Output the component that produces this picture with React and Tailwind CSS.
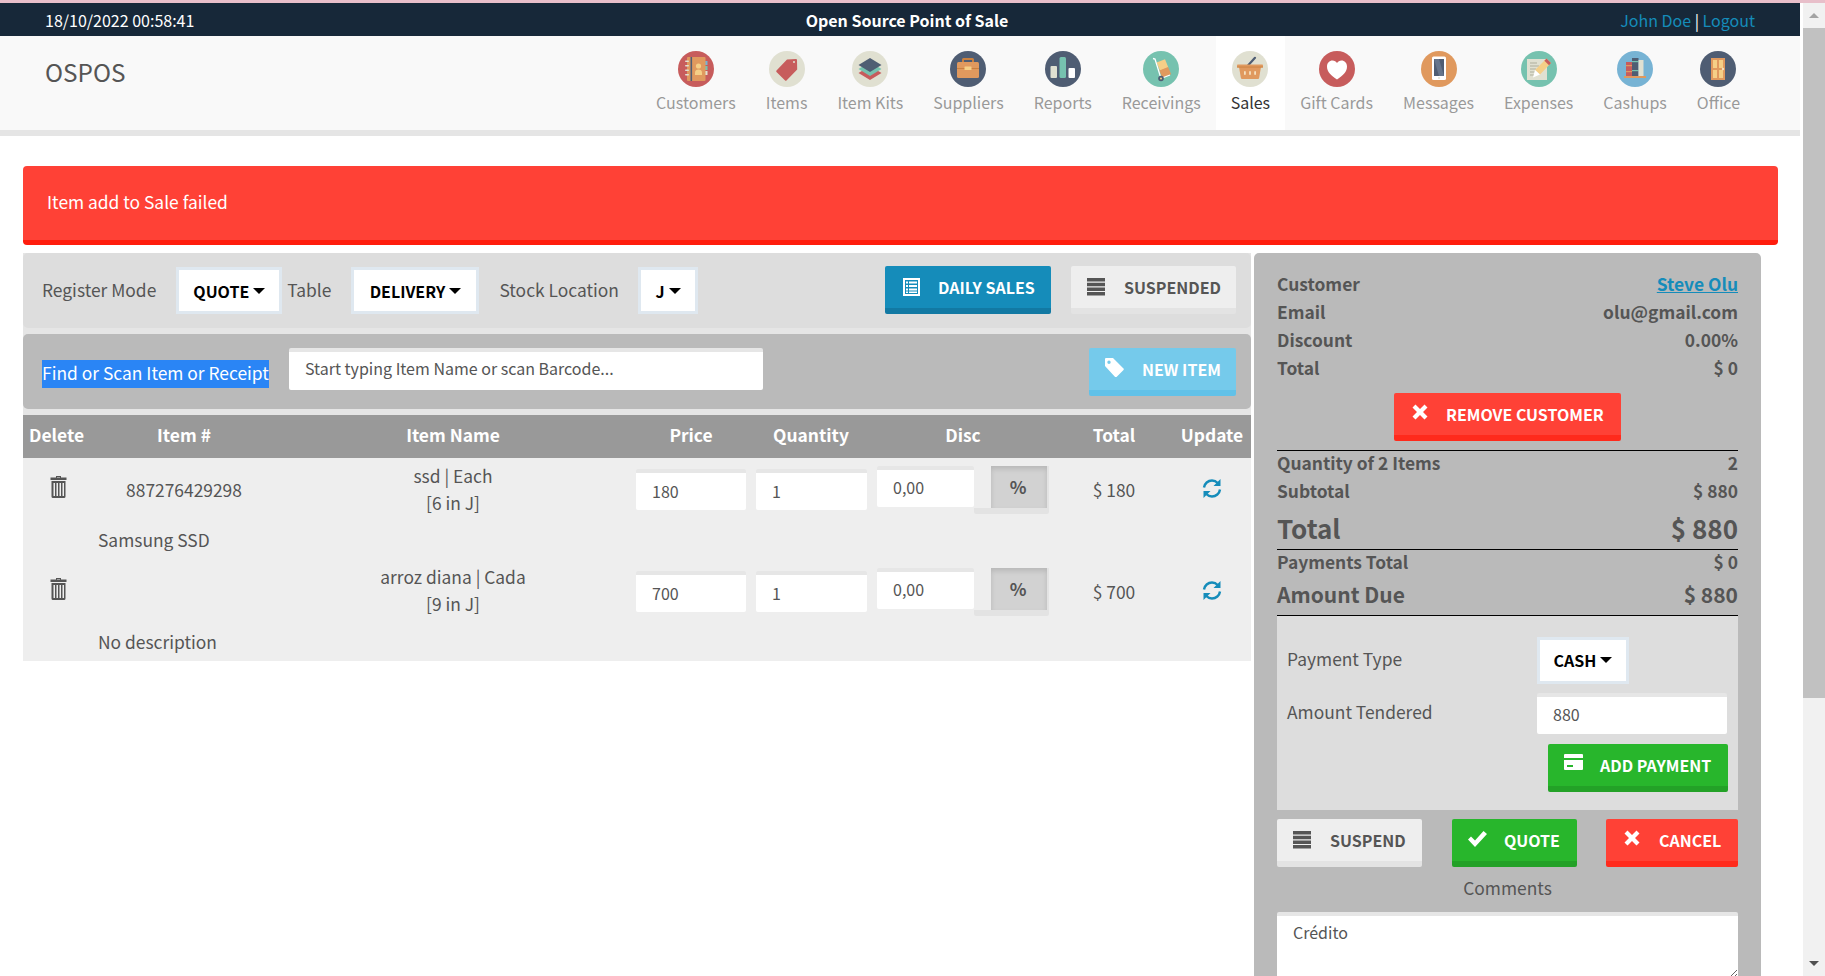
import { useState } from "react";

const font = "font-['Noto_Sans_CJK_SC','Source_Sans_Pro','Noto_Sans',sans-serif]";

const RoundIcon = ({ bg, children }) => (
  <svg width="36" height="36" viewBox="0 0 36 36" className="block">
    <circle cx="18" cy="18" r="18" fill={bg} />
    {children}
  </svg>
);

const navIcons = {
  Customers: (
    <RoundIcon bg="#c75c5c">
      <rect x="27" y="10" width="2.5" height="4" fill="#77b3d4" />
      <rect x="27" y="15" width="2.5" height="4" fill="#76c2af" />
      <rect x="27" y="20" width="2.5" height="4" fill="#e0e0d1" />
      <rect x="9" y="6" width="18.5" height="24" rx="1" fill="#e0995e" />
      <rect x="12.5" y="6" width="1.6" height="24" fill="#4f5d73" />
      <rect x="7" y="9.5" width="4" height="1.6" rx="0.8" fill="#e0e0d1" />
      <rect x="7" y="14" width="4" height="1.6" rx="0.8" fill="#e0e0d1" />
      <rect x="7" y="18.5" width="4" height="1.6" rx="0.8" fill="#e0e0d1" />
      <rect x="7" y="23" width="4" height="1.6" rx="0.8" fill="#e0e0d1" />
      <circle cx="20.5" cy="15" r="2.6" fill="#f5cf87" />
      <path d="M17 24v-2.5c0-2 1.6-3 3.5-3s3.5 1 3.5 3V24z" fill="#f5cf87" />
    </RoundIcon>
  ),
  Items: (
    <RoundIcon bg="#e0e0d1">
      <path d="M18 8.5 27 8a1 1 0 0 1 1 1l.2 9.5L17.5 29.5a1 1 0 0 1-1.4 0l-8.6-8.6a1 1 0 0 1 0-1.4z" fill="#c75c5c" />
      <circle cx="25" cy="11" r="1" fill="#e0e0d1" />
    </RoundIcon>
  ),
  "Item Kits": (
    <RoundIcon bg="#e0e0d1">
      <path d="M18 15 29.5 22 18 29 6.500 22z" fill="#c75c5c" />
      <path d="M18 11 29.5 18 18 25 6.500 18z" fill="#76c2af" />
      <path d="M18 7 29.5 14 18 21 6.500 14z" fill="#4f5d73" />
    </RoundIcon>
  ),
  Suppliers: (
    <RoundIcon bg="#4f5d73">
      <path d="M12 12V8.500A1.500 1.500 0 0 1 13.500 7h9A1.500 1.500 0 0 1 24 8.500V12h-2V9h-8v3z" fill="#c9803f" />
      <rect x="7" y="11" width="22" height="16" rx="1.500" fill="#e0995e" />
      <rect x="7" y="17" width="22" height="1" fill="#c9803f" />
      <rect x="14.500" y="15.500" width="7" height="3.500" rx="0.500" fill="#f5cf87" />
    </RoundIcon>
  ),
  Reports: (
    <RoundIcon bg="#4f5d73">
      <rect x="5.500" y="15" width="6.500" height="12" rx="1" fill="#e0e0d1" />
      <rect x="14.500" y="6" width="6.500" height="21" rx="1.500" fill="#76c2af" />
      <rect x="23.500" y="17" width="6.500" height="10" rx="1" fill="#ffffff" />
    </RoundIcon>
  ),
  Receivings: (
    <RoundIcon bg="#76c2af">
      <rect x="15" y="9.500" width="9" height="9" fill="#f5cf87" transform="rotate(-22 19.500 14)" />
      <rect x="17.500" y="17.500" width="9.500" height="8" fill="#e0995e" transform="rotate(-22 22 21.500)" />
      <path d="M10 7.500 12 8l6 19.500 9-3.500" fill="none" stroke="#ffffff" strokeWidth="1.300" />
      <circle cx="18" cy="27.500" r="2.800" fill="#4f5d73" />
      <circle cx="18" cy="27.500" r="1" fill="#f5cf87" />
    </RoundIcon>
  ),
  Sales: (
    <RoundIcon bg="#e0e0d1">
      <path d="M16 14.500 23 6.800" stroke="#4f5d73" strokeWidth="2.200" strokeLinecap="round" />
      <path d="M7 16h22l-1.800 10.500a1.500 1.500 0 0 1-1.500 1.500H10.300a1.500 1.500 0 0 1-1.500-1.500z" fill="#e0995e" />
      <rect x="5" y="13.500" width="26" height="3" rx="0.800" fill="#e0995e" />
      <rect x="5" y="15.600" width="26" height="0.900" fill="#c9803f" />
      <rect x="12" y="20" width="1.800" height="4" rx="0.900" fill="#f5e0bf" />
      <rect x="17.100" y="20" width="1.800" height="4" rx="0.900" fill="#f5e0bf" />
      <rect x="22.200" y="20" width="1.800" height="4" rx="0.900" fill="#f5e0bf" />
    </RoundIcon>
  ),
  "Gift Cards": (
    <RoundIcon bg="#c75c5c">
      <path d="M18 28.500C12 24.500 8 21 8 15.500 8 12 10.500 9.500 13.500 9.500c2 0 3.500 1 4.500 2.500 1-1.500 2.500-2.500 4.500-2.500 3 0 5.500 2.500 5.500 6 0 5.500-4 9-10 13z" fill="#ffffff" />
    </RoundIcon>
  ),
  Messages: (
    <RoundIcon bg="#e0995e">
      <rect x="11" y="5.500" width="14" height="23.500" rx="1.500" fill="#ffffff" />
      <rect x="13" y="8" width="10" height="17" fill="#4f5d73" />
      <path d="M13 8h5l5 17h-5z" fill="#66758c" />
      <circle cx="18" cy="27" r="0.900" fill="#e0e0d1" />
    </RoundIcon>
  ),
  Expenses: (
    <RoundIcon bg="#76c2af">
      <rect x="6" y="8" width="20" height="21" fill="#e0e0d1" />
      <path d="M9 12h7M9 15h9M9 18h6M9 21h5M9 24h4" stroke="#a8a896" strokeWidth="0.900" />
      <path d="M25.500 7.500 30 12 19 23.500 14 19z" fill="#f5cf87" />
      <path d="M25.500 7.500 30 12 28 14.200 23.400 9.700z" fill="#c75c5c" />
      <path d="M14 19 19 23.500 12 26.500z" fill="#ffffff" />
    </RoundIcon>
  ),
  Cashups: (
    <RoundIcon bg="#77b3d4">
      <rect x="9" y="11" width="6" height="14" fill="#c75c5c" />
      <rect x="9" y="14" width="6" height="1.200" fill="#e0995e" />
      <rect x="9" y="20" width="6" height="1.200" fill="#e0995e" />
      <rect x="15" y="7" width="6.500" height="18" fill="#4f5d73" />
      <rect x="15" y="10" width="6.500" height="1.200" fill="#76c2af" />
      <rect x="15" y="19" width="6.500" height="1.200" fill="#76c2af" />
      <rect x="21.500" y="9" width="5" height="16" fill="#e0e0d1" />
      <rect x="7" y="25" width="22" height="2" fill="#e0995e" />
    </RoundIcon>
  ),
  Office: (
    <RoundIcon bg="#4f5d73">
      <rect x="11" y="7" width="14" height="22" fill="#e0995e" />
      <rect x="13" y="9" width="4" height="8" fill="#f5cf87" />
      <rect x="19" y="9" width="4" height="8" fill="#f5cf87" />
      <rect x="13" y="19" width="4" height="8" fill="#f5cf87" />
      <rect x="19" y="19" width="4" height="8" fill="#f5cf87" />
      <circle cx="23" cy="18" r="1.200" fill="#f5e0bf" />
    </RoundIcon>
  ),
};

const navItems = ["Customers", "Items", "Item Kits", "Suppliers", "Reports", "Receivings", "Sales", "Gift Cards", "Messages", "Expenses", "Cashups", "Office"];

const Caret = () => (
  <span className="ml-[4px] inline-block h-0 w-0 border-x-[6px] border-t-[6px] border-x-transparent border-t-black" />
);

const Dropdown = ({ label, className }) => (
  <button className={`flex h-[47px] items-center justify-center border-[3px] border-[#dfe8f0] bg-white text-[16px] font-bold leading-none text-black ${className}`}>
    {label}
    <Caret />
  </button>
);

const ListIcon = () => (
  <svg width="17" height="18" viewBox="0 0 17 18" fill="#fff">
    <path fillRule="evenodd" d="M0 0h17v18H0zM2 2v14h13V2z" />
    <path d="M3 3.500h2v2H3zM6 3.500h8v2H6zM3 7h2v2H3zM6 7h8v2H6zM3 10.500h2v2H3zM6 10.500h8v2H6zM3 13.500h2v1.500H3zM6 13.500h8v1.500H6z" />
  </svg>
);

const BarsIcon = () => (
  <svg width="18" height="18" viewBox="0 0 18 18" fill="#555">
    <path d="M0 0h18v3.500H0zM0 4.700h18v3.500H0zM0 9.400h18v3.500H0zM0 14.100h18v3.500H0z" />
  </svg>
);

const TagIcon = () => (
  <svg width="19" height="19" viewBox="0 0 19 19" fill="#fff" className="mb-[4px]">
    <path fillRule="evenodd" d="M0 1a1 1 0 0 1 1-1h7l10.500 10.500a1 1 0 0 1 0 1.400l-7 7a1 1 0 0 1-1.400 0L0 8zM4 2.500a1.700 1.700 0 1 0 0 3.400 1.700 1.700 0 0 0 0-3.400z" />
  </svg>
);

const CrossIcon = () => (
  <svg width="16" height="16" viewBox="0 0 16 16" fill="#fff" className="mb-[4px]">
    <path d="M3.500.500 8 5 12.500.500l3 3L11 8l4.500 4.500-3 3L8 11l-4.500 4.500-3-3L5 8 .500 3.500z" />
  </svg>
);

const CardIcon = () => (
  <svg width="19" height="16" viewBox="0 0 19 16" fill="#fff" className="mb-[6px]">
    <path fillRule="evenodd" d="M1 0h17a1 1 0 0 1 1 1v3H0V1a1 1 0 0 1 1-1zM0 6h19v9a1 1 0 0 1-1 1H1a1 1 0 0 1-1-1zm3 5v2h6v-2z" />
  </svg>
);

const CheckIcon = () => (
  <svg width="19" height="16" viewBox="0 0 19 16" fill="#fff" className="mb-[2px]">
    <path d="M0 8.500 3 5.500 7 9.500 15.500 0 19 3 7 16z" />
  </svg>
);

const TrashIcon = () => (
  <svg width="17" height="22" viewBox="0 0 17 22" fill="#555">
    <path d="M6 0h5v1.500h5.500V4H.5V1.500H6zM7 1v.6h3V1z" />
    <path fillRule="evenodd" d="M1.500 5h14v15.500a1.500 1.500 0 0 1-1.500 1.500H3a1.500 1.500 0 0 1-1.500-1.500zM3.500 7v13h1.500V7zm3 0v13H8V7zm3 0v13H11V7zm3 0v13H14V7z" />
  </svg>
);

const RefreshIcon = () => (
  <svg width="20" height="21" viewBox="0 0 20 21" fill="none" stroke="#158cba" strokeWidth="2.400">
    <path d="M2 9.500C2.500 5.500 6 2.500 10 2.500c2.300 0 4.300 1 5.700 2.500" />
    <path d="M18 11.500c-.5 4-4 7-8 7-2.300 0-4.300-1-5.700-2.500" />
    <path d="M18.500 1v7h-7z" fill="#158cba" stroke="none" />
    <path d="M1.500 20v-7h7z" fill="#158cba" stroke="none" />
  </svg>
);

// lumen style button, thick darker bottom edge
const Btn = ({ icon, label, className }) => (
  <button className={`flex h-[48px] items-center rounded-[2px] border-b-[6px] text-[16px] font-bold leading-none whitespace-nowrap ${className}`}>
    {icon}
    <span>{label}</span>
  </button>
);

const TextInput = ({ value, placeholder, className }) => (
  <input
    readOnly
    value={value}
    placeholder={placeholder}
    className={`h-[41px] rounded-[2px] border-t-[4px] border-t-[#e6e6e6] bg-white text-[16px] text-[#555] outline-none placeholder:text-[#555] ${font} ${className}`}
  />
);

const SummaryRow = ({ label, value, className = "h-[28px] pb-[4px] text-[17.4px]" }) => (
  <div className={`flex items-center justify-between font-bold text-[#555] ${className}`}>
    <span>{label}</span>
    {value}
  </div>
);

const SaleRow = ({ num, name, nameClass, stock, price, total, desc, descClass }) => (
  <div>
    <div className="grid h-[68px] grid-cols-[70px_182px_356px_120px_120px_184px_118px_78px] text-[#555]">
      <div className="pt-[18px] pl-[27px]"><TrashIcon /></div>
      <div className="pt-[21px] text-center leading-[22px]">{num}</div>
      <div className={`text-center leading-[27px] ${nameClass}`}>
        <div>{name}</div>
        <div>{stock}</div>
      </div>
      <div className="pt-[11px] pl-[5px]"><TextInput value={price} className="w-[110px] pb-[2px] pl-[16px]" /></div>
      <div className="pt-[11px] pl-[5px]"><TextInput value="1" className="w-[111px] pb-[2px] pl-[16px]" /></div>
      <div className="flex pt-[8px] pl-[6px]">
        <TextInput value="0,00" className="w-[97px] pb-[3px] pl-[16px]" />
        <div className="flex h-[48px] w-[75px] rounded-[2px] border-b-[6px] border-b-[#e3e3e3] bg-[#eee]">
          <div className="w-[17px] shrink-0" />
          <div className="flex flex-1 items-center justify-center bg-[#d2d2d2] pr-[2px] font-bold shadow-[inset_0_3px_5px_rgba(0,0,0,0.125)]">%</div>
          <div className="w-[2px] shrink-0 bg-[#e3e3e3]" />
        </div>
      </div>
      <div className="pt-[21px] text-center leading-[22px]">{total}</div>
      <div className="flex justify-center pt-[20px]"><RefreshIcon /></div>
    </div>
    <div className={`pl-[75px] leading-[28px] text-[#555] ${descClass}`}>{desc}</div>
  </div>
);

export default function App() {
  const [comment] = useState("Crédito");

  return (
    <div className={`flex h-screen flex-col overflow-hidden bg-white text-[17.4px] ${font}`}>
      <div className="h-[3px] shrink-0 bg-[#e8bfca]" />
      <div className="flex min-h-0 flex-1">
        <div className="w-[1803px] shrink-0">
          {/* top bar */}
          <div className="grid h-[33px] w-[1800px] grid-cols-3 items-center bg-[#172839] px-[45px] text-[16px] text-white">
            <div>18/10/2022 00:58:41</div>
            <div className="pl-[14px] text-center font-bold">Open Source Point of Sale</div>
            <div className="text-right text-[#158cba]">
              John Doe <span className="text-white">|</span> Logout
            </div>
          </div>

          {/* nav */}
          <div className="flex h-[100px] w-[1800px] justify-between border-b-[6px] border-[#e5e5e5] bg-[#f9f9f9] pr-[45px] pl-[45px]">
            <div className="pt-[18px] text-[24.3px] leading-[36px] text-[#555]">OSPOS</div>
            <div className="flex text-[16px]">
              {navItems.map((name) => (
                <div
                  key={name}
                  className={name === "Sales"
                    ? "flex flex-col items-center bg-white px-[15px] pt-[15px] text-[#333]"
                    : "flex flex-col items-center px-[15px] pt-[15px] text-[#999]"}
                >
                  {navIcons[name]}
                  <div className="mt-[5px] whitespace-nowrap leading-[20px]">{name}</div>
                </div>
              ))}
            </div>
          </div>

          {/* alert */}
          <div className="mt-[30px] ml-[23px] flex h-[79px] w-[1755px] items-center rounded-[4px] border-b-[5px] border-[#ff1d0d] bg-[#ff4136] pb-[2px] pl-[24px] text-white">
            Item add to Sale failed
          </div>

          <div className="mt-[8px] ml-[23px] flex items-start">
            {/* register */}
            <div className="w-[1228px]">
              <div className="flex flex-col gap-[6px] bg-[#e5e5e5] pb-[6px]">
                <div className="flex h-[75px] items-center rounded-[5px] bg-[#ddd] pl-[19px] text-[#555]">
                  <span>Register Mode</span>
                  <Dropdown label="QUOTE" className="ml-[20px] w-[106px]" />
                  <span className="ml-[5px]">Table</span>
                  <Dropdown label="DELIVERY" className="ml-[20px] w-[128px]" />
                  <span className="ml-[20px]">Stock Location</span>
                  <Dropdown label="J" className="ml-[19px] w-[60px]" />
                  <Btn icon={<ListIcon />} label="DAILY SALES" className="mb-[2px] ml-auto w-[166px] gap-[18px] border-[#1279a3] bg-[#158cba] pl-[18px] text-white" />
                  <Btn icon={<BarsIcon />} label="SUSPENDED" className="mr-[15px] mb-[2px] ml-[20px] w-[165px] gap-[19px] border-[#e3e3e3] bg-[#eee] pl-[16px] text-[#555]" />
                </div>
                <div className="flex h-[75px] items-start rounded-[5px] bg-[#bababa] pl-[19px]">
                  <span className="mt-[26px] flex h-[28px] w-[227px] items-center justify-center bg-[#2a85f5] pb-[2px] whitespace-nowrap text-white">
                    Find or Scan Item or Receipt
                  </span>
                  <TextInput placeholder="Start typing Item Name or scan Barcode..." className="mt-[14px] ml-[20px] h-[42px] w-[474px] pb-[7px] pl-[16px]" />
                  <Btn icon={<TagIcon />} label="NEW ITEM" className="mt-[14px] mr-[15px] ml-auto w-[147px] gap-[18px] border-[#61c1e8] bg-[#75caeb] pl-[16px] text-white" />
                </div>
              </div>

              <div className="grid h-[43px] grid-cols-[70px_182px_356px_120px_120px_184px_118px_78px] items-center bg-[#999] pb-[2px] text-center font-bold text-white">
                <div className="pr-[3px]">Delete</div>
                <div>Item #</div>
                <div>Item Name</div>
                <div>Price</div>
                <div>Quantity</div>
                <div>Disc</div>
                <div>Total</div>
                <div>Update</div>
              </div>

              <div className="bg-[#eee]">
                <SaleRow num="887276429298" name="ssd | Each" nameClass="pt-[4px]" stock="[6 in J]" price="180" total="$ 180" desc="Samsung SSD" descClass="h-[34px]" />
                <SaleRow num="" name="arroz diana | Cada" nameClass="pt-[3px]" stock="[9 in J]" price="700" total="$ 700" desc="No description" descClass="h-[33px]" />
              </div>
            </div>

            {/* sale summary */}
            <div className="ml-[3px] h-[760px] w-[507px] shrink-0 rounded-[5px] bg-[#bababa] px-[23px] pt-[19px]">
              <SummaryRow label="Customer" value={<a className="text-[#158cba] underline">Steve Olu</a>} />
              <SummaryRow label="Email" value={<span>olu@gmail.com</span>} />
              <SummaryRow label="Discount" value={<span>0.00%</span>} />
              <SummaryRow label="Total" value={<span>$ 0</span>} />
              <div className="mt-[9px] flex justify-center">
                <Btn icon={<CrossIcon />} label="REMOVE CUSTOMER" className="w-[227px] gap-[18px] border-[#ff2a1c] bg-[#ff4136] pl-[18px] text-white" />
              </div>
              <div className="mt-[9px] border-t border-black" />
              <SummaryRow label="Quantity of 2 Items" value={<span>2</span>} />
              <SummaryRow label="Subtotal" value={<span>$ 880</span>} />
              <SummaryRow label="Total" value={<span>$ 880</span>} className="h-[42px] pb-[2px] text-[26px]" />
              <div className="border-t border-black" />
              <SummaryRow label="Payments Total" value={<span>$ 0</span>} />
              <SummaryRow label="Amount Due" value={<span>$ 880</span>} className="h-[37px] pb-[4px] text-[21px]" />
              <div className="border-t border-black" />

              <div className="h-[194px] bg-[#ddd] pt-[21px] text-[#555]">
                <div className="flex h-[46px] items-center">
                  <span className="w-[260px] pb-[2px] pl-[10px]">Payment Type</span>
                  <Dropdown label="CASH" className="w-[92px]" />
                </div>
                <div className="mt-[10px] flex items-center">
                  <span className="w-[260px] pb-[2px] pl-[10px]">Amount Tendered</span>
                  <TextInput value="880" className="w-[190px] pb-[3px] pl-[16px]" />
                </div>
                <div className="mt-[10px] flex justify-end pr-[10px]">
                  <Btn icon={<CardIcon />} label="ADD PAYMENT" className="w-[180px] gap-[17px] border-[#23a127] bg-[#28b62c] pl-[16px] text-white" />
                </div>
              </div>

              <div className="mt-[9px] flex justify-between">
                <Btn icon={<BarsIcon />} label="SUSPEND" className="w-[145px] gap-[19px] border-[#e3e3e3] bg-[#eee] pl-[16px] text-[#555]" />
                <Btn icon={<CheckIcon />} label="QUOTE" className="ml-[30px] w-[125px] gap-[17px] border-[#23a127] bg-[#28b62c] pl-[16px] text-white" />
                <Btn icon={<CrossIcon />} label="CANCEL" className="ml-[29px] w-[132px] gap-[19px] border-[#ff2a1c] bg-[#ff4136] pl-[18px] text-white" />
              </div>
              <div className="flex h-[45px] items-center justify-center pb-[2px] text-[#555]">Comments</div>
              <textarea
                readOnly
                value={comment}
                className="block h-[66px] w-full rounded-[2px] border-t-[4px] border-t-[#e6e6e6] bg-white pt-[4px] pl-[16px] text-[16px] text-[#555] outline-none"
              />
            </div>
          </div>
        </div>

        {/* page scrollbar */}
        <div className="flex w-[22px] shrink-0 flex-col bg-[#f1f1f1]">
          <div className="flex h-[25px] items-center justify-center pb-[1px]">
            <span className="h-0 w-0 border-x-[5px] border-b-[5px] border-x-transparent border-b-[#a3a3a3]" />
          </div>
          <div className="h-[670px] bg-[#c1c1c1]" />
          <div className="flex flex-1 items-end justify-center pb-[10px]">
            <span className="h-0 w-0 border-x-[5px] border-t-[5px] border-x-transparent border-t-[#505050]" />
          </div>
        </div>
      </div>
    </div>
  );
}
